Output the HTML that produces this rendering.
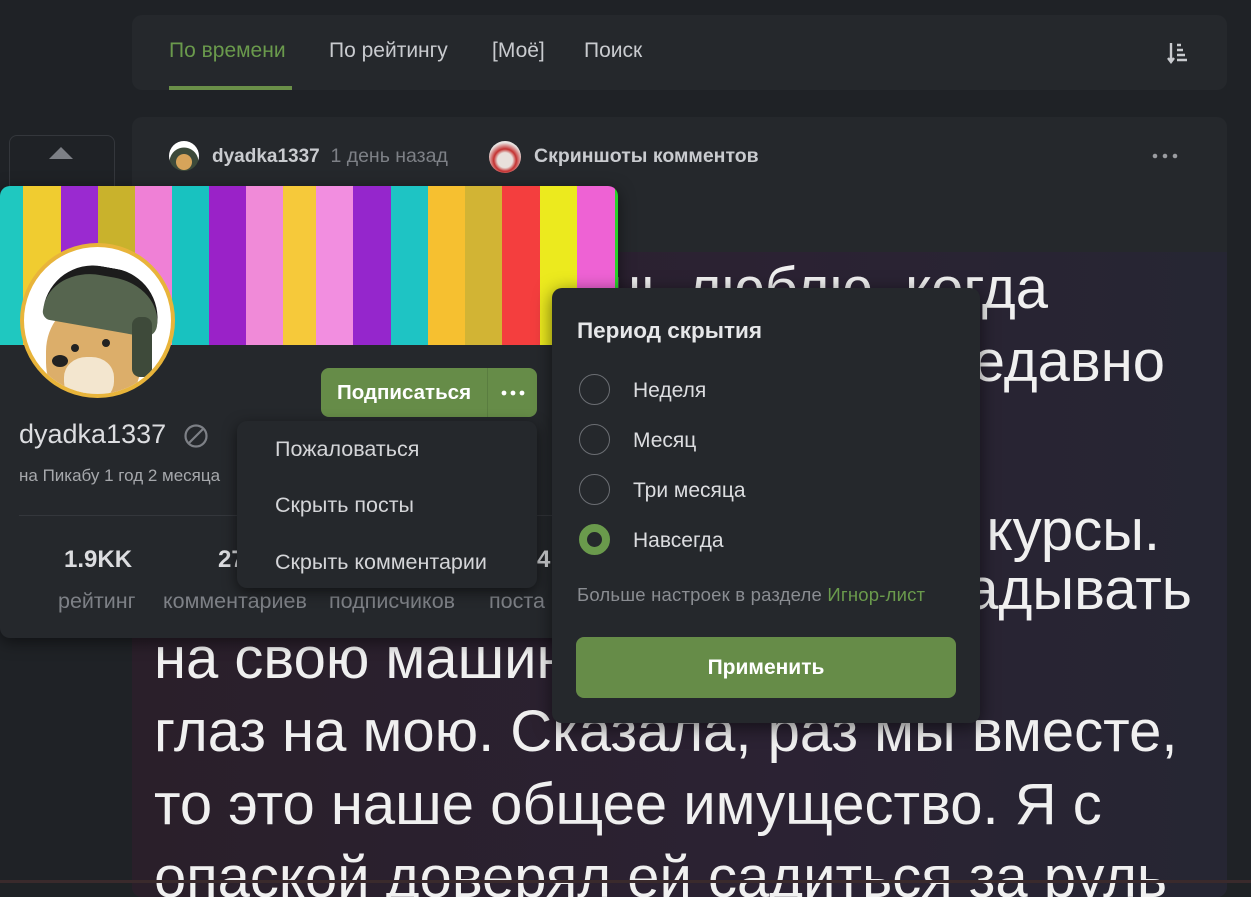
<!DOCTYPE html>
<html><head><meta charset="utf-8"><style>
*{box-sizing:border-box;margin:0;padding:0}
body{width:1251px;height:883px;overflow:hidden;background:#1f2226;font-family:"Liberation Sans","DejaVu Sans",sans-serif;position:relative;color:#dcdde0}
.abs{position:absolute}
.tabs{left:132px;top:15px;width:1095px;height:75px;background:#25282c;border-radius:10px}
.tab{position:absolute;top:24px;font-size:21px;color:#c9cbcf;white-space:nowrap}
.post{left:132px;top:117px;width:1095px;height:780px;background:#25282c;border-radius:10px;overflow:hidden}
.img{position:absolute;left:0;top:135px;width:1095px;height:650px;background:linear-gradient(90deg,#2a1f2a,#2b2233 60%,#262633)}
.big{position:absolute;left:22px;font-size:58px;color:#f0f0f0;white-space:nowrap}
.bigr{position:absolute;font-size:58px;color:#f0f0f0;white-space:nowrap}
.card{left:0;top:186px;width:618px;height:452px;background:#25282c;border-radius:10px;overflow:hidden;box-shadow:0 4px 16px rgba(0,0,0,.5)}
.stripes{position:absolute;left:0;top:0;width:618px;height:159px;display:flex}
.stripes div{height:100%}
.dd{left:237px;top:421px;width:300px;height:167px;background:#25282c;border-radius:10px;box-shadow:0 4px 14px rgba(0,0,0,.55)}
.dd div{position:absolute;left:38px;font-size:21.5px;color:#d4d5d8;white-space:nowrap}
.pop{left:552px;top:288px;width:428px;height:435px;background:#25282c;border-radius:10px;box-shadow:0 4px 18px rgba(0,0,0,.55)}
.radio{position:absolute;left:27px;width:31px;height:31px;border-radius:50%;border:1.5px solid #6b6e73}
.rl{position:absolute;left:81px;font-size:21px;color:#dcdde0;white-space:nowrap}
.stat{position:absolute;top:546px;font-size:24px;font-weight:bold;color:#dcdde0}
.sl{position:absolute;top:589px;font-size:21.5px;color:#7d8086;white-space:nowrap}
</style></head><body>
<div class="abs tabs">
 <div class="tab" style="left:37px;color:#6a9a4c">По времени</div>
 <div class="tab" style="left:197px">По рейтингу</div>
 <div class="tab" style="left:360px">[Моё]</div>
 <div class="tab" style="left:452px">Поиск</div>
 <div class="abs" style="left:37px;top:71px;width:123px;height:4px;background:#6a8f48"></div>
 <svg class="abs" style="left:1035px;top:26px" width="22" height="24" viewBox="0 0 22 24"><path d="M4 2v18M1 17l3 4 3-4M10 4h4M10 9h6M10 14h8M10 19h10" stroke="#c9cbcf" stroke-width="2.4" fill="none"/></svg>
</div>
<div class="abs" style="left:9px;top:135px;width:106px;height:60px;border:1px solid #34373c;border-radius:8px"></div>
<div class="abs" style="left:49px;top:147px;width:0;height:0;border-left:12px solid transparent;border-right:12px solid transparent;border-bottom:12px solid #7d8086"></div>
<div class="abs post">
 <div class="abs" style="left:37px;top:24px;width:30px;height:30px;border-radius:50%;background:radial-gradient(circle at 50% 70%,#d6a45a 30%,#3d4a3a 32%,#3d4a3a 55%,#fff 57%)"></div>
 <div class="abs" style="left:80px;top:28px;font-size:19px;font-weight:bold;color:#c9cbcf;white-space:nowrap">dyadka1337 <span style="font-weight:normal;color:#7d8086;font-size:19.5px">&nbsp;1 день назад</span></div>
 <div class="abs" style="left:357px;top:24px;width:32px;height:32px;border-radius:50%;background:radial-gradient(circle at 50% 60%,#e8e0dc 30%,#c43030 45%,#e9e4e2 70%)"></div>
 <div class="abs" style="left:402px;top:28px;font-size:19.5px;font-weight:bold;color:#c9cbcf;white-space:nowrap">Скриншоты комментов</div>
 <svg class="abs" style="left:1020px;top:36px" width="26" height="6"><circle cx="3" cy="3" r="2.3" fill="#9a9ca0"/><circle cx="13" cy="3" r="2.3" fill="#9a9ca0"/><circle cx="23" cy="3" r="2.3" fill="#9a9ca0"/></svg>
 <div class="img">
  <div class="bigr" style="top:3px;right:179px">Я очень люблю, когда</div>
  <div class="bigr" style="top:76px;right:62px">Моя девушка недавно</div>
  <div class="bigr" style="top:245px;right:67px">окончила курсы.</div>
  <div class="bigr" style="top:304px;right:35px">Начала загадывать</div>
  <div class="big" style="top:373px">на свою машину и положила</div>
  <div class="big" style="top:446px">глаз на мою. Сказала, раз мы вместе,</div>
  <div class="big" style="top:519px">то это наше общее имущество. Я с</div>
  <div class="big" style="top:592px">опаской доверял ей садиться за руль</div>
 </div>
</div>
<div class="abs card">
 <div class="stripes">
  <div style="width:23px;background:#1fc8c0"></div><div style="width:38px;background:#f0cc30"></div><div style="width:37px;background:#9a2ad0"></div><div style="width:37px;background:#c9b22c"></div><div style="width:37px;background:#ef80d6"></div><div style="width:37px;background:#18c2c0"></div><div style="width:37px;background:#9a22c8"></div><div style="width:37px;background:#f08ad8"></div><div style="width:33px;background:#f6c93a"></div><div style="width:37px;background:#f28ee0"></div><div style="width:38px;background:#9526cc"></div><div style="width:37px;background:#1ec4c4"></div><div style="width:37px;background:#f6c030"></div><div style="width:37px;background:#d2b434"></div><div style="width:38px;background:#f43e3e"></div><div style="width:37px;background:#ecea1e"></div><div style="width:38px;background:#ee62d4"></div><div style="width:3px;background:#2bd02b"></div>
 </div>
 <div class="abs" style="left:20px;top:57px;width:155px;height:155px;border-radius:50%;background:#e8b43a;padding:4px">
  <div style="width:100%;height:100%;border-radius:50%;background:#fff;position:relative;overflow:hidden">
   <div class="abs" style="left:22px;top:55px;width:95px;height:110px;border-radius:45%;background:#dcae6a"></div>
   <div class="abs" style="left:40px;top:110px;width:50px;height:45px;border-radius:45%;background:#f3e6cf"></div>
   <div class="abs" style="left:22px;top:20px;width:115px;height:62px;border-radius:60px 60px 14px 10px;background:#56654f;border-top:9px solid #1c1c1c;transform:rotate(10deg)"></div>
   <div class="abs" style="left:108px;top:70px;width:20px;height:60px;border-radius:8px;background:#3e4a3a"></div>
   <div class="abs" style="left:47px;top:97px;width:8px;height:8px;border-radius:50%;background:#222"></div>
   <div class="abs" style="left:78px;top:92px;width:8px;height:8px;border-radius:50%;background:#222"></div>
   <div class="abs" style="left:28px;top:108px;width:16px;height:12px;border-radius:50%;background:#222"></div>
  </div>
 </div>
 <div class="abs" style="left:321px;top:182px;width:216px;height:49px;background:#668c48;border-radius:8px">
  <div class="abs" style="left:16px;top:13px;font-size:20.5px;font-weight:bold;color:#fff;white-space:nowrap">Подписаться</div>
  <div class="abs" style="left:166px;top:0;width:1px;height:49px;background:#5a7d40"></div>
  <svg class="abs" style="left:180px;top:22px" width="24" height="6"><circle cx="3" cy="3" r="2.4" fill="#fff"/><circle cx="12" cy="3" r="2.4" fill="#fff"/><circle cx="21" cy="3" r="2.4" fill="#fff"/></svg>
 </div>
 <div class="abs" style="left:19px;top:233px;font-size:27px;color:#dcdde0">dyadka1337</div>
 <svg class="abs" style="left:183px;top:237px" width="26" height="26"><circle cx="13" cy="13" r="10.5" stroke="#7d8086" stroke-width="2.2" fill="none"/><path d="M6 20L20 6" stroke="#7d8086" stroke-width="2.2"/></svg>
 <div class="abs" style="left:19px;top:280px;font-size:17px;color:#a6a8ac;white-space:nowrap">на Пикабу 1 год 2 месяца</div>
 <div class="abs" style="left:19px;top:329px;width:580px;height:1px;background:#34373c"></div>
</div>
<div class="stat" style="left:64px">1.9KK</div><div class="stat" style="left:218px">27</div><div class="stat" style="left:537px">4</div>
<div class="sl" style="left:58px">рейтинг</div><div class="sl" style="left:163px">комментариев</div><div class="sl" style="left:329px">подписчиков</div><div class="sl" style="left:489px">поста</div>
<div class="abs dd">
 <div style="top:16px">Пожаловаться</div>
 <div style="top:72px">Скрыть посты</div>
 <div style="top:129px">Скрыть комментарии</div>
</div>
<div class="abs pop">
 <div class="abs" style="left:25px;top:30px;font-size:22.5px;font-weight:bold;color:#e6e7e9;white-space:nowrap">Период скрытия</div>
 <div class="radio" style="top:86px"></div><div class="rl" style="top:91px">Неделя</div>
 <div class="radio" style="top:136px"></div><div class="rl" style="top:141px">Месяц</div>
 <div class="radio" style="top:186px"></div><div class="rl" style="top:191px">Три месяца</div>
 <div class="radio" style="top:236px;border:8px solid #6a9a4c;background:#25282c"></div><div class="rl" style="top:241px">Навсегда</div>
 <div class="abs" style="left:25px;top:296px;font-size:18.5px;color:#8a8d92;white-space:nowrap;letter-spacing:0.2px">Больше настроек в разделе <span style="color:#6a9a4c">Игнор-лист</span></div>
 <div class="abs" style="left:24px;top:349px;width:380px;height:61px;background:#668c48;border-radius:8px;text-align:center;line-height:61px;font-size:21px;font-weight:bold;color:#fff">Применить</div>
</div>
<div class="abs" style="left:0;top:880px;width:1251px;height:3px;background:#3a2a2c"></div>
</body></html>
